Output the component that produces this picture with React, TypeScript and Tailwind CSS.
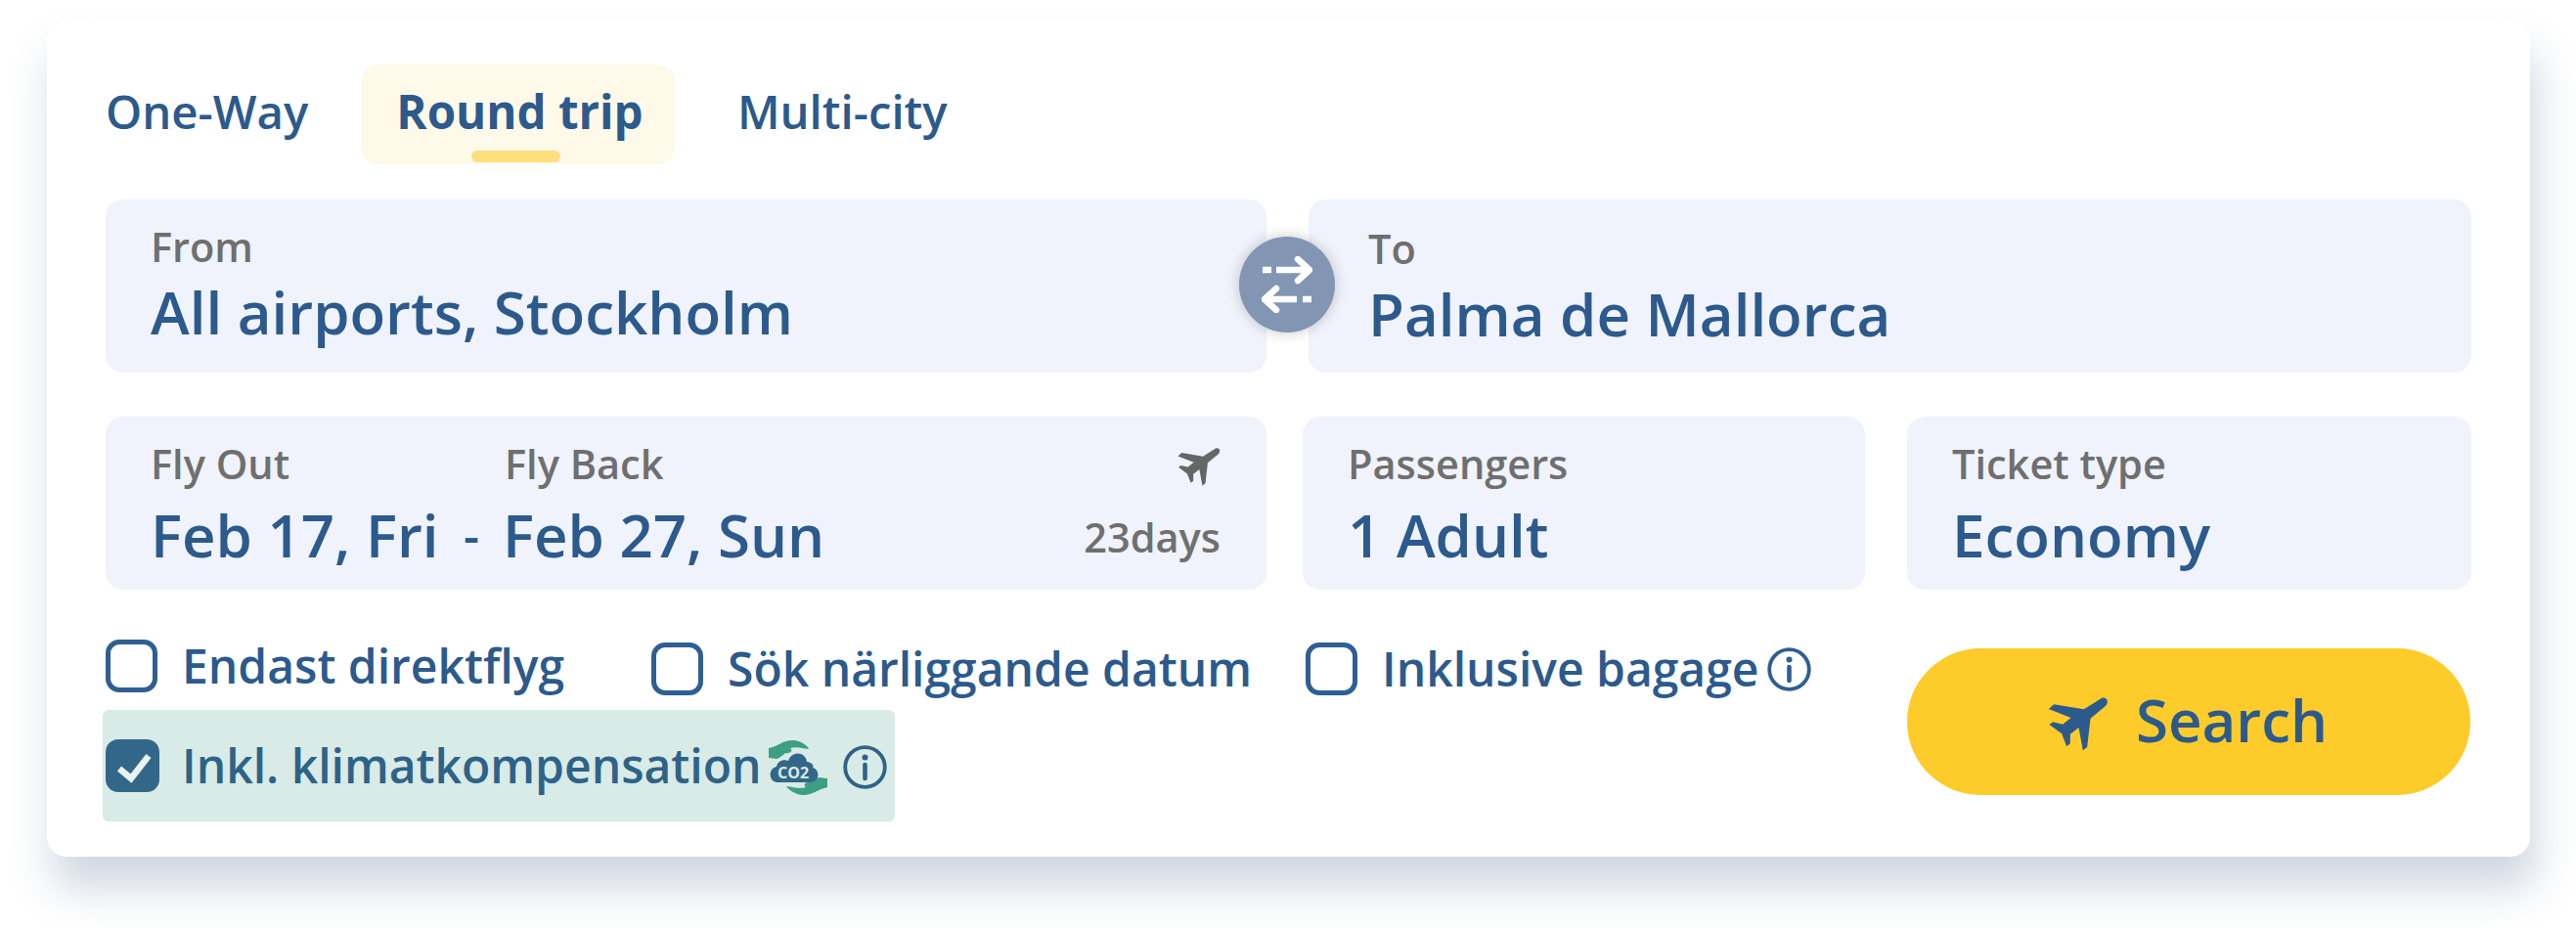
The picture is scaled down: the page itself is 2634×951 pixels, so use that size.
const Plane = ({ className }: { className: string }) => (
  <svg className={className} viewBox="40 40 185 165" fill="currentColor">
    <path d="M204 43 L150 77 L58 62 L42 76 L110 103 L85 123 L55 116 L44 124 L82 152 L97 191 L108 182 L108 153 L134 133 L147 203 L160 193 L170 105 L215 68 C224 60 224 48 217 44 C213 41 208 41 204 43 Z" />
  </svg>
);

const Info = ({ className }: { className: string }) => (
  <svg className={`shrink-0 ${className}`} viewBox="0 0 45 45" fill="none" stroke="currentColor">
    <circle cx="22.5" cy="22.5" r="20.3" strokeWidth="3.8" />
    <path d="M22.5 20v14" strokeWidth="4.6" strokeLinecap="round" />
    <circle cx="22.5" cy="12.5" r="3" fill="currentColor" stroke="none" />
  </svg>
);

const SwapIcon = () => (
  <svg className="w-[52px] h-[58px]" viewBox="0 0 52 58" fill="none" stroke="white" strokeWidth="6.5">
    <path d="M1 14h9" />
    <path d="M15 14h34" />
    <path d="M37 3l12 11-12 11" strokeLinecap="round" strokeLinejoin="round" />
    <path d="M51 44h-9" />
    <path d="M36 44H3" />
    <path d="M15 33L3 44l12 11" strokeLinecap="round" strokeLinejoin="round" />
  </svg>
);

const Co2Icon = () => (
  <svg className="w-[60px] h-[58px] shrink-0" viewBox="0 0 60 58">
    <path d="M0 9 C10 7 16 0 26 1 C34 2 40 7 41 10 C34 9 28 7 22 9 C26 12 21 15 17 14 L15 16 L9 20 L0 19 Z" fill="#3c9f83" />
    <path d="M60 49 C50 51 44 58 34 57 C26 56 20 51 18 48 C26 49 32 51 38 49 C34 46 39 43 43 44 L45 41 L51 39 L60 40 Z" fill="#3c9f83" />
    <path d="M8 44 C0 43 -1 30 8 28 C9 22 15 20 20 22 C24 11 38 13 39 23 C43 23 47 27 45 29 C53 31 52 44 43 44 Z" fill="#33678a" />
    <text x="25" y="40" textAnchor="middle" fontFamily="'Open Sans', sans-serif" fontWeight="700" fontSize="16" fill="#d9ebe6">
      CO2
    </text>
  </svg>
);

const labelClass = "text-[41.5px] leading-[54px] font-semibold text-[#6f6f6f]";

const Field = ({ label, value, className }: { label: string; value: string; className: string }) => (
  <div className={`bg-[#f0f3fb] rounded-[18px] h-[177px] flex flex-col ${className}`}>
    <div className={labelClass}>{label}</div>
    <div className="text-[60px] leading-[80px] font-semibold text-[#2c5a8c]">{value}</div>
  </div>
);

const Check = ({ label, className }: { label: string; className: string }) => (
  <div className={`flex items-center gap-[25px] ${className}`}>
    <div className="w-[53px] h-[54px] rounded-[14px] border-[5px] border-[#2f5f92] bg-white shrink-0" />
    <span className="text-[48px] leading-[54px] font-semibold text-[#2c5a8c] whitespace-nowrap">{label}</span>
  </div>
);

export default function App() {
  return (
    <div className="w-[2634px] h-[951px] bg-white pt-[21px] pl-[48px] overflow-hidden font-['Open_Sans',sans-serif]">
      <div className="w-[2539px] h-[855px] bg-white rounded-[20px] shadow-[6px_32px_44px_rgba(70,95,140,0.26)] pt-[45px] pl-[60px]">
        {/* trip type */}
        <div className="flex items-center h-[102px] text-[47.3px] font-semibold text-[#2c5a8c]">
          <span className="w-[261px] mt-[-6px]">One-Way</span>
          <div className="relative w-[321px] h-full rounded-[18px] bg-[#fff9ea] flex items-center justify-center font-bold">
            <span className="mt-[-6px] ml-[4px] text-[47.5px]">Round trip</span>
            <div className="absolute left-[113px] top-[88px] w-[91px] h-[12px] rounded-full bg-[#fddf7e]" />
          </div>
          <span className="ml-[64px] mt-[-6px]">Multi-city</span>
        </div>

        {/* from / to */}
        <div className="relative flex gap-[43px] mt-[36px]">
          <Field label="From" value="All airports, Stockholm" className="w-[1187px] pl-[46px] pt-[21px]" />
          <Field label="To" value="Palma de Mallorca" className="w-[1189px] pl-[61px] pt-[23px]" />
          <button className="absolute left-[1159px] top-[38px] w-[98px] h-[98px] rounded-full bg-[#8295b3] shadow-[0_0_14px_rgba(0,0,0,0.22)] flex items-center justify-center">
            <SwapIcon />
          </button>
        </div>

        {/* dates, passengers, ticket */}
        <div className="flex mt-[45px]">
          <div className="relative w-[1187px] h-[177px] bg-[#f0f3fb] rounded-[18px] pl-[46px] pt-[21px]">
            <div className={`flex ${labelClass}`}>
              <span className="w-[362px]">Fly Out</span>
              <span>Fly Back</span>
            </div>
            <div className="flex items-center mt-[6px] text-[60px] leading-[80px] font-semibold text-[#2c5a8c]">
              <span className="w-[320px]">Feb 17, Fri</span>
              <span className="w-[40px] text-[50px]">-</span>
              <span>Feb 27, Sun</span>
            </div>
            <Plane className="absolute right-[47px] top-[31px] w-[44px] h-[41px] text-[#666666]" />
            <span className={`absolute right-[47px] top-[96px] ${labelClass}`}>23days</span>
          </div>
          <div className="ml-[37px] w-[575px] h-[177px] bg-[#f0f3fb] rounded-[18px] pl-[46px] pt-[21px]">
            <div className={labelClass}>Passengers</div>
            <div className="mt-[6px] text-[60px] leading-[80px] font-semibold text-[#2c5a8c]">1 Adult</div>
          </div>
          <div className="ml-[43px] w-[577px] h-[177px] bg-[#f0f3fb] rounded-[18px] pl-[46px] pt-[21px]">
            <div className={labelClass}>Ticket type</div>
            <div className="mt-[6px] text-[60px] leading-[80px] font-semibold text-[#2c5a8c]">Economy</div>
          </div>
        </div>

        {/* options + search */}
        <div className="flex mt-[51px]">
          <div className="w-[1842px] pt-0">
            <div className="flex items-start h-[72px]">
              <Check label="Endast direktflyg" className="w-[558px]" />
              <Check label="Sök närliggande datum" className="w-[669px] mt-[3px]" />
              <div className="flex items-center mt-[3px]">
                <Check label="Inklusive bagage" className="" />
                <Info className="ml-[9px] w-[45px] h-[45px] text-[#2f5f92]" />
              </div>
            </div>
            <div className="ml-[-3px] w-[810px] h-[114px] bg-[#d9ebe6] rounded-[6px] flex items-center pl-[3px]">
              <div className="relative w-[55px] h-[54px] rounded-[13px] bg-[#33678a] shrink-0">
                <svg className="absolute inset-0 w-[55px] h-[54px]" viewBox="0 0 55 54" fill="none" stroke="#eaf3f0" strokeWidth="6.5">
                  <path d="M14 30l12 10L44 17" />
                </svg>
              </div>
              <span className="ml-[23px] text-[48px] leading-[54px] font-semibold text-[#2e6389] whitespace-nowrap">
                Inkl. klimatkompensation
              </span>
              <div className="ml-[7px] mt-[3px]">
                <Co2Icon />
              </div>
              <Info className="ml-[16px] mt-[3px] w-[45px] h-[45px] text-[#2e6389]" />
            </div>
          </div>
          <button className="w-[576px] h-[150px] mt-[9px] rounded-full bg-[#fdcc2b] flex items-center justify-center gap-[28px] text-[60px] font-semibold text-[#2c5a8c]">
            <Plane className="w-[62px] h-[55px] mt-[4px] ml-[-2px]" />
            <span className="mt-[-4px]">Search</span>
          </button>
        </div>
      </div>
    </div>
  );
}
